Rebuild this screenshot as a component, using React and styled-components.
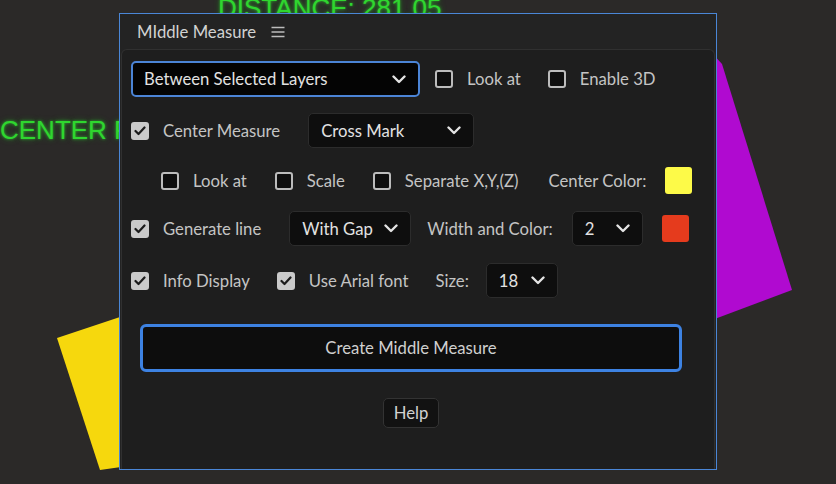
import React from 'react'
import styled, { createGlobalStyle } from 'styled-components'

const GlobalStyle = createGlobalStyle`
  html, body {
    margin: 0;
    padding: 0;
    background: #2b2928;
  }
  body {
    font-family: Lato, 'Noto Sans', sans-serif;
  }
`

const Stage = styled.div`
  position: relative;
  width: 836px;
  height: 484px;
  overflow: hidden;
  box-sizing: border-box;
  padding: 13px 0 0 119px;
  background: #2b2928;
`

// the comp canvas behind the panel
const Shapes = styled.svg`
  position: absolute;
  left: 0;
  top: 0;
`

const CanvasText = styled.div`
  position: absolute;
  left: ${props => props.$x}px;
  top: ${props => props.$y}px;
  font-family: 'Liberation Sans', Arial, sans-serif;
  font-size: 26px;
  line-height: 1;
  white-space: nowrap;
  color: #2fd62f;
  text-shadow: 0 0 3px rgba(50, 230, 50, 0.7), 0 0 6px rgba(30, 200, 30, 0.4);
`

const Panel = styled.section`
  position: relative;
  z-index: 1;
  width: 598px;
  height: 457px;
  box-sizing: border-box;
  border: 1px solid #4a86d6;
  background: #232323;
  display: flex;
  flex-direction: column;
`

const Header = styled.header`
  height: 35px;
  flex: none;
  display: flex;
  align-items: center;
  gap: 15px;
  padding-left: 17px;
  color: #d2d2d2;
  font-size: 16.7px;
`

const Body = styled.div`
  flex: 1;
  margin: 0 1px;
  box-sizing: border-box;
  background: #1e1e1e;
  border: 1px solid #303030;
  border-bottom: none;
  border-radius: 6px 6px 0 0;
  padding: 11px 0 0 9px;
  display: flex;
  flex-direction: column;
`

const Row = styled.div`
  height: ${props => props.$h || 35}px;
  margin-top: ${props => props.$mt || 0}px;
  margin-left: ${props => props.$ml || 0}px;
  display: flex;
  align-items: center;
  gap: ${props => props.$gap || 27}px;
`

const Field = styled.div`
  display: flex;
  align-items: center;
  gap: ${props => props.$gap || 17}px;
  margin-left: ${props => props.$ml || 0}px;
`

const Label = styled.span`
  color: #c4c4c4;
  font-size: 16.7px;
  white-space: nowrap;
`

const Check = styled.label`
  display: flex;
  align-items: center;
  gap: 14px;
`

const Box = styled.span`
  width: 18px;
  height: 18px;
  box-sizing: border-box;
  border-radius: 3px;
  border: 2px solid ${props => (props.$on ? '#cacaca' : '#bcbcbc')};
  background: ${props => (props.$on ? '#cacaca' : '#0e0e0e')};
  display: flex;
  align-items: center;
  justify-content: center;
`

const Select = styled.div`
  width: ${props => props.$w}px;
  height: ${props => (props.$main ? 36 : 35)}px;
  box-sizing: border-box;
  display: flex;
  align-items: center;
  justify-content: space-between;
  padding: 0 ${props => props.$pr || 12}px 0 ${props => props.$pl || 12}px;
  background: ${props => (props.$main ? '#040404' : '#0e0e0e')};
  border: ${props => (props.$main ? '2px solid #4b84d6' : '1px solid #2c2c2c')};
  border-radius: 5px;
  color: #e2e2e2;
  font-size: 16.7px;
  white-space: nowrap;
`

const Swatch = styled.span`
  width: 27px;
  height: 27px;
  border-radius: 3px;
  background: ${props => props.$color};
`

const CreateButton = styled.button`
  margin: 26px 0 0 9px;
  width: 542px;
  height: 48px;
  box-sizing: border-box;
  background: #0d0d0d;
  border: 3px solid #3d82e2;
  border-radius: 6px;
  color: #d0d0d0;
  font-family: inherit;
  font-size: 16.7px;
`

const HelpRow = styled.div`
  width: 542px;
  margin: 26px 0 0 9px;
  display: flex;
  justify-content: center;
`

const HelpButton = styled.button`
  height: 30px;
  padding: 0 10px;
  background: #121212;
  border: 1px solid #333;
  border-radius: 5px;
  color: #d2d2d2;
  font-family: inherit;
  font-size: 16.7px;
`

const Chevron = () => (
  <svg width="14" height="9" viewBox="0 0 14 9">
    <polyline points="1.5,1.5 7,7 12.5,1.5" fill="none" stroke="#e4e4e4" strokeWidth="2.4" strokeLinecap="round" strokeLinejoin="round" />
  </svg>
)

const Menu = () => (
  <svg width="14" height="12" viewBox="0 0 14 12">
    <path d="M0.5 1.5h13M0.5 6h13M0.5 10.5h13" stroke="#bcbcbc" strokeWidth="1.3" />
  </svg>
)

const CheckItem = ({ on, children }) => (
  <Check>
    <Box $on={on}>
      {on && (
        <svg width="12" height="10" viewBox="0 0 12 10">
          <polyline points="1.5,5 4.5,8 10.5,1.5" fill="none" stroke="#1b1b1b" strokeWidth="2.2" strokeLinecap="round" strokeLinejoin="round" />
        </svg>
      )}
    </Box>
    <Label>{children}</Label>
  </Check>
)

const Dropdown = ({ children, ...rest }) => (
  <Select {...rest}>
    <span>{children}</span>
    <Chevron />
  </Select>
)

export default function App() {
  return (
    <Stage>
      <GlobalStyle />
      <Shapes width="836" height="484">
        <polygon points="57,338 135,312 135,465 100,470" fill="#f6d80d" />
        <polygon points="700,40 722,64 792,290 712,320" fill="#b00ad0" />
      </Shapes>
      <CanvasText $x={218} $y={-5}>DISTANCE: 281.05</CanvasText>
      <CanvasText $x={0} $y={117}>CENTER P</CanvasText>

      <Panel>
        <Header>
          <span>MIddle Measure</span>
          <Menu />
        </Header>
        <Body>
          <Row $h={36} $gap={15}>
            <Dropdown $main $w={289} $pl={11}>Between Selected Layers</Dropdown>
            <Row $gap={27}>
              <CheckItem>Look at</CheckItem>
              <CheckItem>Enable 3D</CheckItem>
            </Row>
          </Row>

          <Row $mt={16} $gap={28}>
            <CheckItem on>Center Measure</CheckItem>
            <Dropdown $w={166}>Cross Mark</Dropdown>
          </Row>

          <Row $mt={15} $ml={30} $gap={28}>
            <CheckItem>Look at</CheckItem>
            <CheckItem>Scale</CheckItem>
            <CheckItem>Separate X,Y,(Z)</CheckItem>
            <Field $gap={19} $ml={2}>
              <Label>Center Color:</Label>
              <Swatch $color="#fdfa48" />
            </Field>
          </Row>

          <Row $mt={13} $gap={28}>
            <CheckItem on>Generate line</CheckItem>
            <Field $gap={16}>
              <Dropdown $w={122}>With Gap</Dropdown>
              <Field $gap={19}>
                <Label>Width and Color:</Label>
                <Dropdown $w={71}>2</Dropdown>
                <Swatch $color="#e53b1d" />
              </Field>
            </Field>
          </Row>

          <Row $mt={17}>
            <CheckItem on>Info Display</CheckItem>
            <CheckItem on>Use Arial font</CheckItem>
            <Field>
              <Label>Size:</Label>
              <Dropdown $w={72}>18</Dropdown>
            </Field>
          </Row>

          <CreateButton>Create Middle Measure</CreateButton>
          <HelpRow>
            <HelpButton>Help</HelpButton>
          </HelpRow>
        </Body>
      </Panel>
    </Stage>
  )
}
